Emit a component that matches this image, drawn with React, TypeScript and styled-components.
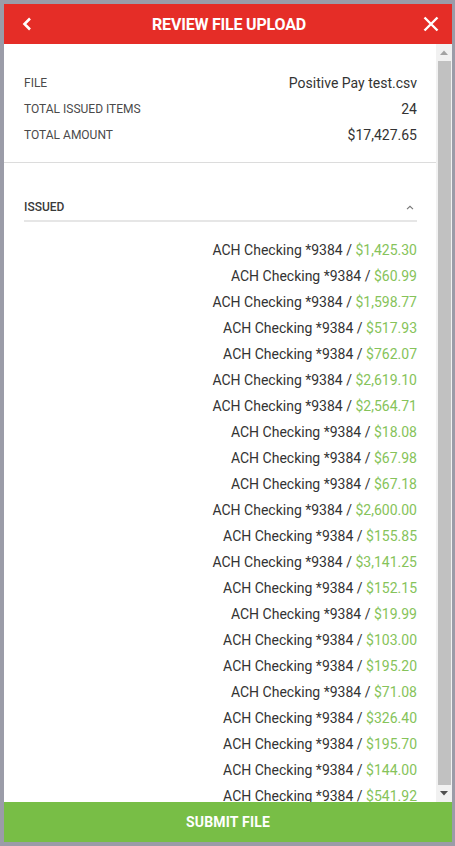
import styled, { createGlobalStyle } from "styled-components";

const GlobalStyle = createGlobalStyle`
  html, body {
    margin: 0;
    padding: 0;
    height: 100%;
    background: #9b9ca8;
  }
  #root {
    height: 100%;
  }
`;

type Item = { account: string; amount: string };

const summary = [
  { label: "File", value: "Positive Pay test.csv" },
  { label: "Total issued items", value: "24" },
  { label: "Total amount", value: "$17,427.65" },
];

// only the rows that fit above the footer
const amounts = [
  "$1,425.30", "$60.99", "$1,598.77", "$517.93", "$762.07", "$2,619.10",
  "$2,564.71", "$18.08", "$67.98", "$67.18", "$2,600.00", "$155.85",
  "$3,141.25", "$152.15", "$19.99", "$103.00", "$195.20", "$71.08",
  "$326.40", "$195.70", "$144.00", "$541.92",
];

const items: Item[] = amounts.map((amount) => ({ account: "ACH Checking *9384", amount }));

function App() {
  return (
    <>
      <GlobalStyle />
      <Backdrop>
        <Modal>
          <Header>
            <IconButton aria-label="back">
              <svg width="10" height="14" viewBox="0 0 10 14">
                <path d="M8 1.5 L2.5 7 L8 12.5" fill="none" stroke="#fff" strokeWidth="2.6" />
              </svg>
            </IconButton>
            <Title>Review File Upload</Title>
            <IconButton aria-label="close">
              <svg width="16" height="16" viewBox="0 0 16 16">
                <path d="M1.5 1.5 L14.5 14.5 M14.5 1.5 L1.5 14.5" stroke="#fff" strokeWidth="2.4" />
              </svg>
            </IconButton>
          </Header>

          <Body>
            <Content>
              <Summary>
                {summary.map((row) => (
                  <SummaryRow key={row.label}>
                    <Label>{row.label}</Label>
                    <Value>{row.value}</Value>
                  </SummaryRow>
                ))}
              </Summary>

              <Section>
                <SectionHead>
                  <SectionTitle>Issued</SectionTitle>
                  <svg width="8" height="5" viewBox="0 0 8 5">
                    <path d="M1 4.2 L4 1.3 L7 4.2" fill="none" stroke="#777" strokeWidth="1.1" />
                  </svg>
                </SectionHead>
                <ItemList>
                  {items.map((item, i) => (
                    <ItemRow key={i}>
                      {item.account} / <Amount>{item.amount}</Amount>
                    </ItemRow>
                  ))}
                </ItemList>
              </Section>
            </Content>

            <Scrollbar>
              <ScrollArrow>
                <svg width="8" height="5" viewBox="0 0 8 5">
                  <path d="M0 5 L4 0.5 L8 5 Z" fill="#a3a3a3" />
                </svg>
              </ScrollArrow>
              <ScrollTrack>
                <Thumb />
              </ScrollTrack>
              <ScrollArrow>
                <svg width="8" height="5" viewBox="0 0 8 5">
                  <path d="M0 0 L8 0 L4 4.5 Z" fill="#505050" />
                </svg>
              </ScrollArrow>
            </Scrollbar>
          </Body>

          <Footer>Submit File</Footer>
        </Modal>
      </Backdrop>
    </>
  );
}

export default App;

const Backdrop = styled.div`
  height: 846px;
  box-sizing: border-box;
  padding: 4px 3px 4px 4px;
  display: flex;
  font-family: Roboto, "Liberation Sans", sans-serif;
`;

const Modal = styled.div`
  flex: 1;
  display: flex;
  flex-direction: column;
  background: #fff;
  overflow: hidden;
`;

const Header = styled.div`
  height: 40px;
  flex-shrink: 0;
  background: #e52d27;
  display: flex;
  align-items: center;
  justify-content: space-between;
  padding: 0 12px 0 14px;
`;

const IconButton = styled.button`
  background: none;
  border: 0;
  padding: 0;
  width: 18px;
  height: 18px;
  display: flex;
  align-items: center;
  justify-content: center;
  cursor: pointer;
`;

const Title = styled.h1`
  margin: 0;
  color: #fff;
  font-size: 16px;
  font-weight: 700;
  text-transform: uppercase;
  letter-spacing: -0.2px;
`;

const Body = styled.div`
  flex: 1;
  min-height: 0;
  display: flex;
`;

const Content = styled.div`
  flex: 1;
  overflow: hidden;
`;

const Summary = styled.div`
  padding: 26px 19px 14px 20px;
  border-bottom: 1px solid #dcdcdc;
`;

const SummaryRow = styled.div`
  height: 26px;
  display: flex;
  align-items: center;
  justify-content: space-between;
`;

const Label = styled.span`
  font-size: 12px;
  color: #4a4a4a;
  text-transform: uppercase;
`;

const Value = styled.span`
  font-size: 14px;
  color: #333;
`;

const Section = styled.div`
  padding: 31px 19px 0 20px;
`;

const SectionHead = styled.div`
  height: 26px;
  display: flex;
  align-items: center;
  justify-content: space-between;
  padding-right: 3px;
  border-bottom: 2px solid #e6e6e6;
  margin-bottom: 15px;
`;

const SectionTitle = styled.span`
  font-size: 12px;
  font-weight: 500;
  color: #3a3a3a;
  text-transform: uppercase;
`;

const ItemList = styled.div`
  display: flex;
  flex-direction: column;
`;

const ItemRow = styled.div`
  height: 26px;
  line-height: 26px;
  text-align: right;
  font-size: 14px;
  color: #333;
`;

const Amount = styled.span`
  color: #86c35a;
`;

const Scrollbar = styled.div`
  width: 16px;
  flex-shrink: 0;
  background: #f1f1f1;
  display: flex;
  flex-direction: column;
`;

const ScrollArrow = styled.div`
  height: 17px;
  display: flex;
  align-items: center;
  justify-content: center;
`;

const ScrollTrack = styled.div`
  flex: 1;
  padding: 0 1px 0 2px;
  display: flex;
`;

const Thumb = styled.div`
  flex: 1;
  background: #c1c1c1;
`;

const Footer = styled.button`
  height: 40px;
  flex-shrink: 0;
  border: 0;
  background: #78be46;
  color: #fff;
  font-family: Roboto, "Liberation Sans", sans-serif;
  font-size: 14px;
  font-weight: 700;
  text-transform: uppercase;
  letter-spacing: 0.2px;
  cursor: pointer;
`;
